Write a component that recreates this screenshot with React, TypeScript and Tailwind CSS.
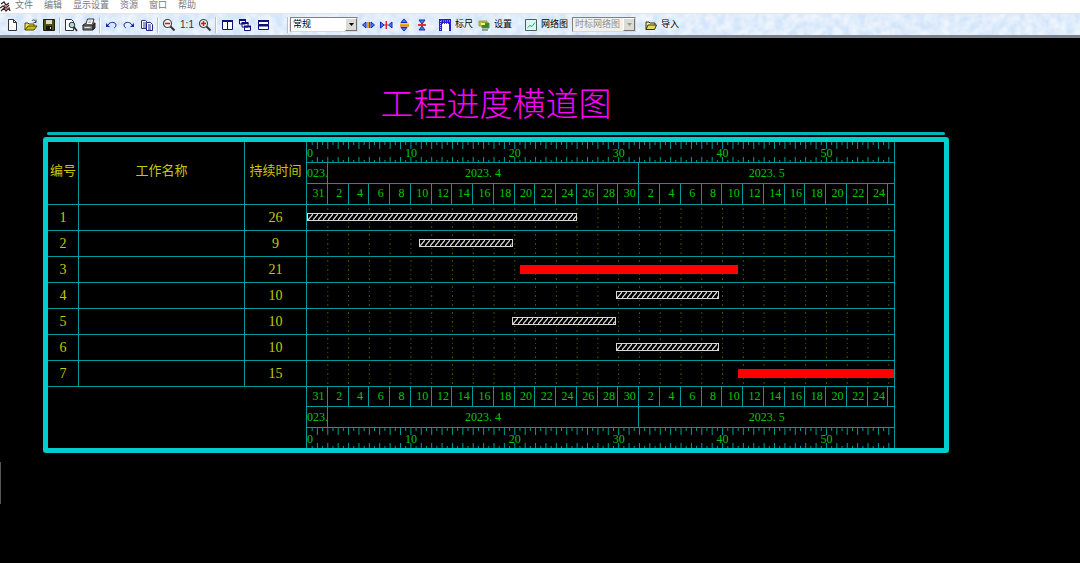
import { useState } from 'react';
import type { ReactNode } from 'react';

interface Task {
  id: number;
  name: string;
  duration: number;
  start: number;
  critical?: boolean;
}

// Number of days covered by the time axis
const TOTAL_DAYS = 56.5;

const TASKS: Task[] = [
  { id: 1, name: '', duration: 26, start: 0 },
  { id: 2, name: '', duration: 9, start: 10.8 },
  { id: 3, name: '', duration: 21, start: 20.5, critical: true },
  { id: 4, name: '', duration: 10, start: 29.7 },
  { id: 5, name: '', duration: 10, start: 19.7 },
  { id: 6, name: '', duration: 10, start: 29.7 },
  { id: 7, name: '', duration: 15, start: 41.5, critical: true },
];

const DATES = [
  31, 2, 4, 6, 8, 10, 12, 14, 16, 18, 20, 22, 24, 26, 28, 30,
  2, 4, 6, 8, 10, 12, 14, 16, 18, 20, 22, 24,
];

const MONTHS = [
  { label: '023.', days: 2 },
  { label: '2023. 4', days: 30 },
  { label: '2023. 5', days: 24.5 },
];

const MENUS = ['文件', '编辑', '显示设置', '资源', '窗口', '帮助'];

const pct = (days: number) => `${(days / TOTAL_DAYS) * 100}%`;

/* ---------- Icons ---------- */

function Svg({ children }: { children: ReactNode }) {
  return (
    <svg width="14" height="14" viewBox="0 0 14 14" fill="none" className="shrink-0" aria-hidden="true">
      {children}
    </svg>
  );
}

const NewIcon = () => (
  <Svg>
    <path d="M2.500 1.500h5l3 3v8h-8z" fill="#fff" stroke="#333" />
    <path d="M7.500 1.500v3h3" stroke="#333" />
  </Svg>
);

const OpenIcon = () => (
  <Svg>
    <path d="M1 12V5h3l1 1h5v2" fill="#f0e060" stroke="#4a4a00" />
    <path d="M1 12l3-4h9l-3 4z" fill="#c8b818" stroke="#4a4a00" />
    <path d="M8 3c1-2 3-1 4 1M12 1.500v3H9.500" stroke="#222" strokeWidth=".8" />
  </Svg>
);

const SaveIcon = () => (
  <Svg>
    <path d="M1.500 1.500h11v11h-11z" fill="#4f5010" stroke="#1c1c10" />
    <path d="M4 2h6v4H4z" fill="#d8dcd0" />
    <path d="M4 8h6v4H4z" fill="#151510" />
    <path d="M8 9h1v2H8z" fill="#ddd" />
  </Svg>
);

const PreviewIcon = () => (
  <Svg>
    <path d="M1.500 1.500h6l2 2v9h-8z" fill="#fff" stroke="#333" />
    <circle cx="8" cy="7" r="2.800" fill="#a9d4dc" stroke="#333" />
    <path d="M10 9l3 4" stroke="#222" strokeWidth="1.600" />
  </Svg>
);

const PrintIcon = () => (
  <Svg>
    <path d="M1 7l3-2h9l-2 3H1z" fill="#999" stroke="#333" />
    <path d="M4 6l1.500-5H12l-1.500 5" fill="#fff" stroke="#333" />
    <path d="M6.500 3h3M6 4.500h3" stroke="#888" strokeWidth=".7" />
    <path d="M1 7h10v5H1z" fill="#777" stroke="#222" />
    <path d="M11 7l2-2v5l-2 2z" fill="#444" stroke="#222" />
    <path d="M2.500 9.500h6" stroke="#ddd" />
  </Svg>
);

const UndoIcon = () => (
  <Svg>
    <path d="M4 7c2-4 8-3 8 0 0 1.500-1 2.500-2 3" stroke="#1a2aa0" />
    <path d="M2 5v4h4z" fill="#1a2aa0" />
  </Svg>
);

const RedoIcon = () => (
  <Svg>
    <path d="M10 7C8 3 2 4 2 7c0 1.500 1 2.500 2 3" stroke="#1a2aa0" />
    <path d="M12 5v4H8z" fill="#1a2aa0" />
  </Svg>
);

const CopyIcon = () => (
  <Svg>
    <path d="M1.500 2.500h4l2 2v6h-6z" fill="#fff" stroke="#333a70" />
    <path d="M3 5h3M3 7h3M3 9h3" stroke="#333a70" />
    <path d="M6.500 4.500h4l2 2v6h-6z" fill="#fff" stroke="#1c2488" />
    <path d="M8 7h3M8 9h3M8 11h3" stroke="#1c2488" />
  </Svg>
);

function MagnifierIcon({ plus }: { plus?: boolean }) {
  return (
    <Svg>
      <circle cx="5.500" cy="5.500" r="4" fill="#f6f8fa" stroke="#444" strokeWidth="1.200" />
      <path d="M8.500 8.500l4 4" stroke="#333" strokeWidth="2" />
      <path d={plus ? 'M3 5.500h5M5.500 3v5' : 'M3 5.500h5'} stroke="#d01818" strokeWidth="1.600" />
    </Svg>
  );
}

const TileVIcon = () => (
  <Svg>
    <path d="M2.500 2.500h10v9h-10zM7.500 3v8" fill="#fff" stroke="#10107a" />
    <path d="M2 3h11" stroke="#10107a" strokeWidth="2" />
  </Svg>
);

const CascadeIcon = () => (
  <Svg>
    <path d="M1.500 2h6v4h-6zM4 5h6v4H4zM6.500 8.500h6v4h-6z" fill="#fff" stroke="#10107a" />
    <path d="M1 2h7M3.500 5h7M6 8.500h7" stroke="#10107a" strokeWidth="2" />
  </Svg>
);

const TileHIcon = () => (
  <Svg>
    <path d="M2.500 2.500h10v4h-10zM2.500 7.500h10v4h-10z" fill="#fff" stroke="#10107a" />
    <path d="M2 3h11M2 7.500h11" stroke="#10107a" strokeWidth="2" />
  </Svg>
);

const WidenIcon = () => (
  <Svg>
    <path d="M1.500 7L5 4v6zM13.500 7L10 4v6z" fill="#4a80f0" stroke="#1428c0" />
    <path d="M7 4v6" stroke="#f0a000" strokeWidth="2" />
    <path d="M8.500 4v6" stroke="#d02020" />
  </Svg>
);

const NarrowIcon = () => (
  <Svg>
    <path d="M1.500 4L5 7l-3.500 3zM13 4L9.500 7l3.500 3z" fill="#4a80f0" stroke="#1428c0" />
    <path d="M7.300 3v8" stroke="#e02020" strokeWidth="1.400" />
    <path d="M5 7h4" stroke="#e02020" />
  </Svg>
);

const TallerIcon = () => (
  <Svg>
    <path d="M7 1l3 3.500H4zM7 13l3-3.500H4z" fill="#4a80f0" stroke="#1428c0" />
    <path d="M3 6.500h9" stroke="#f0b000" strokeWidth="2" />
    <path d="M3 8h9" stroke="#d84020" />
  </Svg>
);

const ShorterIcon = () => (
  <Svg>
    <path d="M4 2h6L7 6zM4 12h6L7 8z" fill="#4a80f0" stroke="#1428c0" />
    <path d="M3 7h8" stroke="#e02020" strokeWidth="1.800" />
    <path d="M7 4v6" stroke="#e02020" />
  </Svg>
);

const RulerIcon = () => (
  <Svg>
    <path d="M1 1h12v12H1z" fill="#2020d0" />
    <path d="M4 5h7v8H4z" fill="#fff" />
    <path d="M3 3h9M2.500 3v9" stroke="#e8b0f0" strokeDasharray="1 1" />
    <path d="M4 5.500h7" stroke="#80206a" strokeDasharray="1 1" />
  </Svg>
);

const SettingsIcon = () => (
  <Svg>
    <path d="M2 3h8v5H2z" fill="#b4bc48" stroke="#a8a040" />
    <path d="M5 5h7v5H5z" fill="#308830" stroke="#60883c" />
    <path d="M4 6h4" stroke="#fff26a" strokeWidth="2" />
    <path d="M5 12h6" stroke="#777" strokeWidth="1.400" />
  </Svg>
);

const NetworkIcon = () => (
  <Svg>
    <path d="M1.500 1.500h11v11h-11z" fill="#dcf7f0" stroke="#4a605c" />
    <path d="M3.500 9.500l2.500-2 2 1 3-4" stroke="#28a888" />
  </Svg>
);

const ImportIcon = () => (
  <Svg>
    <path d="M2 11.500V4h3l1 1h5v2" fill="#f6ec90" stroke="#333010" />
    <path d="M2 11.500l2-4.500h8.500l-2 4.500z" fill="#e4d860" stroke="#333010" />
  </Svg>
);

function AppLogo() {
  return (
    <svg width="11" height="11" viewBox="0 0 11 11" fill="none" className="shrink-0" aria-hidden="true">
      <path d="M1 3l3-2 2 3 3-2M0 7l3-2 3 2 3-3M1 10l3-3 2 3 3-3 1 3" stroke="#332b2b" strokeWidth="1.300" />
      <path d="M4 4l2 3M6 8h3" stroke="#c03030" strokeWidth="1.200" />
    </svg>
  );
}

/* ---------- Toolbar ---------- */

function ToolButton({ label, children }: { label: string; children: ReactNode }) {
  return (
    <button type="button" aria-label={label} title={label} className="flex h-5 w-[18px] shrink-0 items-center justify-center">
      {children}
    </button>
  );
}

function TextButton({ label, icon }: { label: string; icon: ReactNode }) {
  return (
    <button type="button" className="flex h-5 shrink-0 items-center gap-[3px] whitespace-nowrap">
      {icon}
      <span>{label}</span>
    </button>
  );
}

const Separator = () => <div className="mx-px h-4 w-[2px] shrink-0 border-l border-r border-l-[#b4c0d0] border-r-white" />;

interface PickerProps {
  label: string;
  value: string;
  options: string[];
  onChange?: (v: string) => void;
  disabled?: boolean;
}

function Picker({ label, value, options, onChange, disabled }: PickerProps) {
  return (
    <div
      className={`relative flex h-[15px] shrink-0 border border-t-[#808080] border-l-[#808080] border-r-[#d8d8d8] border-b-[#d8d8d8] ${
        disabled ? 'w-16 bg-[#f0f0ec] text-[#909090]' : 'w-[68px] bg-white text-black'
      }`}
    >
      <select
        aria-label={label}
        value={value}
        disabled={disabled}
        onChange={(e) => onChange?.(e.target.value)}
        className="h-full w-full appearance-none bg-transparent pl-[2px] text-[9px] leading-[13px] opacity-100 outline-none"
      >
        {options.map((o) => (
          <option key={o}>{o}</option>
        ))}
      </select>
      <span className="pointer-events-none absolute inset-y-0 right-0 flex w-3 items-center justify-center border border-t-white border-l-white border-r-[#707070] border-b-[#707070] bg-[#dcdad4]">
        <svg width="5" height="3" viewBox="0 0 5 3" aria-hidden="true">
          <path d="M0 0h5L2.500 3z" fill={disabled ? '#999' : '#000'} />
        </svg>
      </span>
    </div>
  );
}

function Toolbar() {
  const [mode, setMode] = useState('常规');

  return (
    <div className="relative flex h-[25px] items-center overflow-hidden border-t border-b-[3px] border-t-[#e4e4e8] border-b-[#7c828a] bg-[#d3e5fa] pl-1 text-[9px] text-black">
      {/* Marbled surface */}
      <svg className="absolute inset-0 h-full w-full opacity-60" aria-hidden="true">
        <filter id="marble">
          <feTurbulence type="fractalNoise" baseFrequency="0.12" numOctaves="2" seed="4" />
          <feColorMatrix values="0 0 0 0 1  0 0 0 0 1  0 0 0 0 1  2 0 0 0 -0.500" />
        </filter>
        <rect width="100%" height="100%" filter="url(#marble)" />
      </svg>
      <div className="relative flex items-center">
        <ToolButton label="新建"><NewIcon /></ToolButton>
        <ToolButton label="打开"><OpenIcon /></ToolButton>
        <ToolButton label="保存"><SaveIcon /></ToolButton>
        <Separator />
        <ToolButton label="预览"><PreviewIcon /></ToolButton>
        <ToolButton label="打印"><PrintIcon /></ToolButton>
        <Separator />
        <ToolButton label="撤销"><UndoIcon /></ToolButton>
        <ToolButton label="重做"><RedoIcon /></ToolButton>
        <ToolButton label="复制"><CopyIcon /></ToolButton>
        <Separator />
        <ToolButton label="缩小"><MagnifierIcon /></ToolButton>
        <button type="button" className="h-5 w-[18px] text-[10px] leading-5 text-[#333]">1:1</button>
        <ToolButton label="放大"><MagnifierIcon plus /></ToolButton>
        <Separator />
        <ToolButton label="垂直平铺"><TileVIcon /></ToolButton>
        <ToolButton label="层叠"><CascadeIcon /></ToolButton>
        <ToolButton label="水平平铺"><TileHIcon /></ToolButton>
      </div>
      <div className="relative ml-[14px] flex items-center">
        <Separator />
        <Picker label="模式" value={mode} options={['常规', '时标']} onChange={setMode} />
        <div className="w-px" />
        <ToolButton label="加宽"><WidenIcon /></ToolButton>
        <ToolButton label="变窄"><NarrowIcon /></ToolButton>
        <ToolButton label="加高"><TallerIcon /></ToolButton>
        <ToolButton label="变矮"><ShorterIcon /></ToolButton>
      </div>
      <div className="relative ml-[7px] flex items-center">
        <TextButton label="标尺" icon={<RulerIcon />} />
        <div className="w-1" />
        <TextButton label="设置" icon={<SettingsIcon />} />
        <div className="w-3" />
        <TextButton label="网络图" icon={<NetworkIcon />} />
        <div className="w-1" />
        <Picker label="网络图类型" value="时标网络图" options={['时标网络图']} disabled />
        <div className="w-2" />
        <TextButton label="导入" icon={<ImportIcon />} />
      </div>
    </div>
  );
}

/* ---------- Time axis ---------- */

function Ruler() {
  const ticks = Array.from({ length: 112 }, (_, i) => (i + 1) / 2);
  return (
    <div className="relative h-5">
      <svg className="absolute inset-0 h-full w-full" stroke="#009a9a" aria-hidden="true">
        {ticks.map((d) => {
          const whole = Number.isInteger(d);
          return (
            <g key={d}>
              <line x1={pct(d)} x2={pct(d)} y1="0" y2={whole ? 7 : 3} />
              <line x1={pct(d)} x2={pct(d)} y1={whole ? 15 : 18} y2="20" />
            </g>
          );
        })}
      </svg>
      <span className="absolute top-1 left-0 leading-[14px]">0</span>
      {[10, 20, 30, 40, 50].map((d) => (
        <span key={d} className="absolute top-1 -translate-x-1/2 leading-[14px]" style={{ left: pct(d) }}>
          {d}
        </span>
      ))}
    </div>
  );
}

function Months() {
  return (
    <div className="flex h-[22px] border-y border-[#009a9a] leading-5">
      {MONTHS.map((m, i) => (
        <div
          key={m.label}
          className={`overflow-hidden text-center ${i < MONTHS.length - 1 ? 'border-r border-[#009a9a]' : ''}`}
          style={{ width: pct(m.days) }}
        >
          {m.label}
        </div>
      ))}
    </div>
  );
}

function Dates() {
  return (
    <div className="flex leading-[19px]">
      {DATES.map((d, i) => (
        <div key={i} className="border-r border-[#009a9a] pl-[3px] text-center" style={{ width: pct(2) }}>
          {d}
        </div>
      ))}
    </div>
  );
}

function Bar({ task }: { task: Task }) {
  const style = { left: pct(task.start), width: pct(task.duration) };
  if (task.critical) {
    return <div className="absolute top-2 h-[9px] bg-[#ff0000]" style={style} />;
  }
  return (
    <div className="absolute top-2 h-2 border border-[#d8d8d8] bg-black" style={style}>
      <svg className="block h-full w-full" aria-hidden="true">
        <defs>
          <pattern id={`hatch-${task.id}`} width="5" height="6" patternUnits="userSpaceOnUse">
            <path d="M0 6L5 0" stroke="#e0e0e0" strokeWidth="1.200" />
          </pattern>
        </defs>
        <rect width="100%" height="100%" fill={`url(#hatch-${task.id})`} />
      </svg>
    </div>
  );
}

function GridLines() {
  return (
    <svg className="absolute inset-0 h-full w-full" stroke="#4c4c00" strokeDasharray="2 3 1 3" aria-hidden="true">
      {DATES.map((_, i) => (
        <line key={i} x1={pct((i + 1) * 2)} x2={pct((i + 1) * 2)} y1="3" y2="100%" />
      ))}
    </svg>
  );
}

/* ---------- Chart ---------- */

function GanttTable() {
  return (
    <table className="w-full table-fixed border-separate border-spacing-0 font-['Liberation_Serif','Noto_Sans_CJK_SC',serif] text-sm text-[#c8c800] [&_td]:p-0">
      <colgroup>
        <col className="w-[31px]" />
        <col className="w-[166px]" />
        <col className="w-[62px]" />
        <col />
        <col className="w-[49px]" />
      </colgroup>
      <thead>
        <tr className="h-[63px] text-[13px] whitespace-nowrap">
          <th className="border-r border-b border-[#009a9a] p-0 pb-1 font-normal">编号</th>
          <th className="border-r border-b border-[#009a9a] p-0 pb-1 font-normal">工作名称</th>
          <th className="border-r border-b border-[#009a9a] p-0 pb-1 font-normal">持续时间</th>
          <th className="border-r border-b border-[#009a9a] p-0 text-xs font-normal text-[#00c800]">
            <Ruler />
            <Months />
            <div className="flex h-5 flex-col *:flex-1">
              <Dates />
            </div>
          </th>
          <td />
        </tr>
      </thead>
      <tbody>
        {TASKS.map((task) => (
          <tr key={task.id} className="h-[26px] text-center leading-6">
            <td className="border-r border-b border-[#009a9a]">{task.id}</td>
            <td className="border-r border-b border-[#009a9a]">{task.name}</td>
            <td className="border-r border-b border-[#009a9a]">{task.duration}</td>
            <td className="relative border-r border-b border-[#009a9a]">
              <GridLines />
              <Bar task={task} />
            </td>
            <td />
          </tr>
        ))}
      </tbody>
      <tfoot>
        <tr>
          <td colSpan={3} className="border-r border-[#009a9a]" />
          <td className="border-r border-[#009a9a] text-center text-xs text-[#00c800]">
            <Dates />
            <Months />
            <Ruler />
          </td>
          <td />
        </tr>
      </tfoot>
    </table>
  );
}

export default function App() {
  return (
    <div className="relative min-h-screen bg-black font-['Liberation_Sans','Noto_Sans_CJK_SC',sans-serif]">
      <nav className="flex h-[13px] items-center gap-[11px] bg-white text-[9px] leading-3 text-[#777]">
        <div className="-mr-[7px] flex">
          <AppLogo />
        </div>
        {MENUS.map((m) => (
          <button key={m} type="button" className="-mt-1 whitespace-nowrap">
            {m}
          </button>
        ))}
      </nav>
      <Toolbar />

      <main className="mr-[131px] ml-[43px] pt-11">
        <h1 className="mb-[10px] text-center font-['Noto_Sans_CJK_SC',sans-serif] text-[33px] leading-10 font-light text-[#ff00ff]">
          工程进度横道图
        </h1>
        <div className="mr-1 ml-1 h-[3px] rounded-sm bg-[#00b4b8]" />
        <div className="mt-[2px] rounded-[3px] border-[5px] border-[#00cdcd]">
          <GanttTable />
        </div>
      </main>

      {/* Docked panel edge */}
      <div className="absolute top-[462px] left-0 h-[42px] w-px bg-[#555]" />
    </div>
  );
}
